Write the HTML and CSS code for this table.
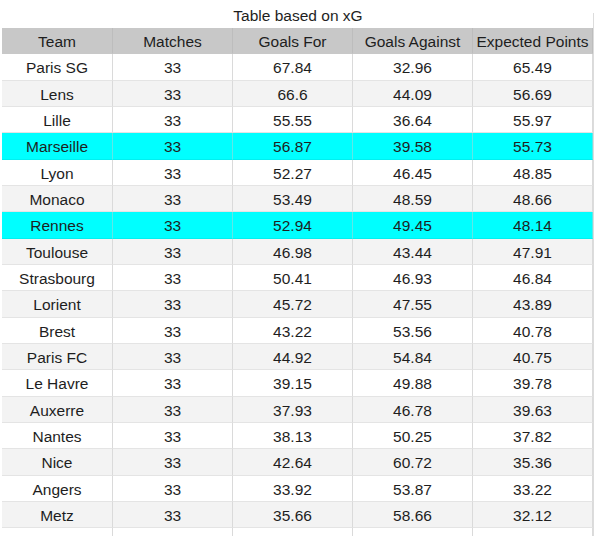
FILE: index.html
```html
<!DOCTYPE html>
<html>
<head>
<meta charset="utf-8">
<link rel="stylesheet" href="styles.css">
</head>
<body>
<div class="sheet">
  <div class="title">Table based on xG</div>
  <div class="grid">
    <div class="cell head">Team</div><div class="cell head">Matches</div><div class="cell head">Goals For</div><div class="cell head">Goals Against</div><div class="cell head">Expected Points</div>
    <div class="cell">Paris SG</div><div class="cell">33</div><div class="cell">67.84</div><div class="cell">32.96</div><div class="cell">65.49</div>
    <div class="cell alt">Lens</div><div class="cell alt">33</div><div class="cell alt">66.6</div><div class="cell alt">44.09</div><div class="cell alt">56.69</div>
    <div class="cell">Lille</div><div class="cell">33</div><div class="cell">55.55</div><div class="cell">36.64</div><div class="cell">55.97</div>
    <div class="cell hl">Marseille</div><div class="cell hl">33</div><div class="cell hl">56.87</div><div class="cell hl">39.58</div><div class="cell hl">55.73</div>
    <div class="cell">Lyon</div><div class="cell">33</div><div class="cell">52.27</div><div class="cell">46.45</div><div class="cell">48.85</div>
    <div class="cell alt">Monaco</div><div class="cell alt">33</div><div class="cell alt">53.49</div><div class="cell alt">48.59</div><div class="cell alt">48.66</div>
    <div class="cell hl">Rennes</div><div class="cell hl">33</div><div class="cell hl">52.94</div><div class="cell hl">49.45</div><div class="cell hl">48.14</div>
    <div class="cell alt">Toulouse</div><div class="cell alt">33</div><div class="cell alt">46.98</div><div class="cell alt">43.44</div><div class="cell alt">47.91</div>
    <div class="cell">Strasbourg</div><div class="cell">33</div><div class="cell">50.41</div><div class="cell">46.93</div><div class="cell">46.84</div>
    <div class="cell alt">Lorient</div><div class="cell alt">33</div><div class="cell alt">45.72</div><div class="cell alt">47.55</div><div class="cell alt">43.89</div>
    <div class="cell">Brest</div><div class="cell">33</div><div class="cell">43.22</div><div class="cell">53.56</div><div class="cell">40.78</div>
    <div class="cell alt">Paris FC</div><div class="cell alt">33</div><div class="cell alt">44.92</div><div class="cell alt">54.84</div><div class="cell alt">40.75</div>
    <div class="cell">Le Havre</div><div class="cell">33</div><div class="cell">39.15</div><div class="cell">49.88</div><div class="cell">39.78</div>
    <div class="cell alt">Auxerre</div><div class="cell alt">33</div><div class="cell alt">37.93</div><div class="cell alt">46.78</div><div class="cell alt">39.63</div>
    <div class="cell">Nantes</div><div class="cell">33</div><div class="cell">38.13</div><div class="cell">50.25</div><div class="cell">37.82</div>
    <div class="cell alt">Nice</div><div class="cell alt">33</div><div class="cell alt">42.64</div><div class="cell alt">60.72</div><div class="cell alt">35.36</div>
    <div class="cell">Angers</div><div class="cell">33</div><div class="cell">33.92</div><div class="cell">53.87</div><div class="cell">33.22</div>
    <div class="cell alt">Metz</div><div class="cell alt">33</div><div class="cell alt">35.66</div><div class="cell alt">58.66</div><div class="cell alt">32.12</div>
    <div class="cell"></div><div class="cell"></div><div class="cell"></div><div class="cell"></div><div class="cell"></div>
  </div>
</div>
</body>
</html>
```
FILE: styles.css
```css
html, body {
  margin: 0;
  padding: 0;
  background: #ffffff;
}
body {
  font-family: "Liberation Sans", Arial, sans-serif;
  font-size: 15.5px;
  color: #1e1e1e;
  overflow: hidden;
  height: 536px;
}
.sheet {
  width: 594px;
  padding-left: 2px;
  box-sizing: border-box;
}
.title {
  height: 28px;
  line-height: 32px;
  text-align: center;
  width: 592px;
  background: linear-gradient(#dcdcdc, #dcdcdc) no-repeat right bottom / 1px 15px;
}
.grid {
  display: grid;
  grid-template-columns: 111px repeat(4, 120px);
  grid-template-rows: 26.3px;
  grid-auto-rows: 26.33px;
  width: 592px;
  border-right: 1px solid #dcdcdc;
  box-sizing: border-box;
}
.cell {
  box-sizing: border-box;
  border-right: 1px solid #dadada;
  border-bottom: 1px solid #e4e4e4;
  text-align: center;
  line-height: 27px;
  white-space: nowrap;
  background: #ffffff;
}
.head {
  background: #c8c8c8;
  border-right-color: #bdbdbd;
  border-bottom-color: #c8c8c8;
}
.alt {
  background: #f3f3f3;
}
.hl {
  background: #00ffff;
  border-right-color: #5fe7e7;
  border-bottom-color: #00f0f0;
}
```
